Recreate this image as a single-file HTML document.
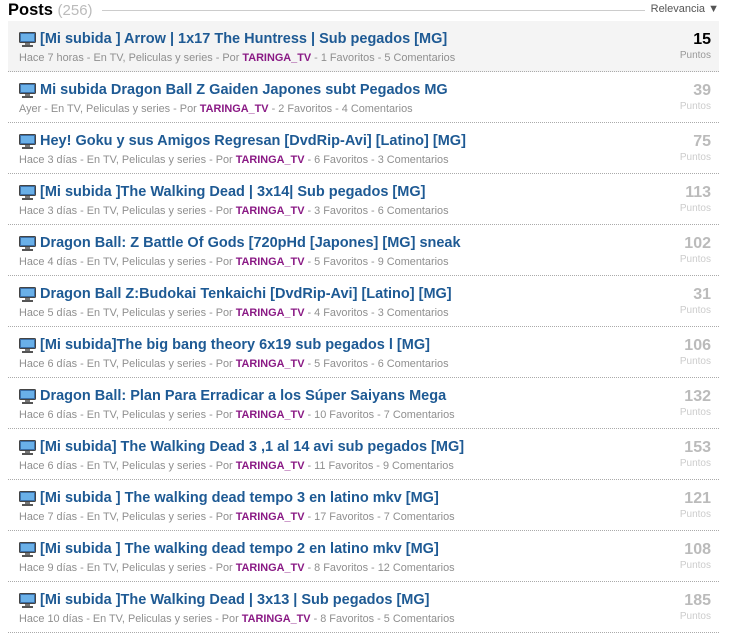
<!DOCTYPE html>
<html><head><meta charset="utf-8"><style>
body{margin:0;background:#fff;font-family:"Liberation Sans",Arial,sans-serif;width:729px;height:634px;overflow:hidden;position:relative}
.hd{position:absolute;left:8px;top:0;font-size:16.5px;font-weight:bold;color:#000;line-height:20px}
.hd span{color:#bbb;font-weight:normal;font-size:15px}
.hl{position:absolute;left:102px;right:84px;top:10px;border-top:1px solid #ccc}
.rel{position:absolute;right:10px;top:3px;font-size:11px;color:#555}
.row{position:absolute;left:8px;width:711px;height:50px;border-bottom:1px dotted #aaa}
.row.a{background:#f4f4f4}
.ic{position:absolute;left:11px;top:11px}
.t{position:absolute;left:32px;top:10px;font-size:14.5px;font-weight:bold;color:#1e5a94;white-space:nowrap}
.m{position:absolute;left:11px;top:31px;font-size:10.9px;color:#8f8f8f;white-space:nowrap}
.m b{color:#8a1a85;font-weight:bold}
.n{position:absolute;right:8px;top:10px;font-size:16px;font-weight:bold;color:#bbb;text-align:right}
.p{position:absolute;right:8px;top:29px;font-size:10px;color:#ccc}
.a .n{color:#000}.a .p{color:#999}
</style></head><body>
<div class="hd">Posts <span>(256)</span></div><div class="hl"></div>
<div class="rel">Relevancia ▼</div>
<div id="c"></div>
<script>
var d=[["[Mi subida ] Arrow | 1x17 The Huntress | Sub pegados [MG]","Hace 7 horas","1","5",15],
["Mi subida Dragon Ball Z Gaiden Japones subt Pegados MG","Ayer","2","4",39],
["Hey! Goku y sus Amigos Regresan [DvdRip-Avi] [Latino] [MG]","Hace 3 días","6","3",75],
["[Mi subida ]The Walking Dead | 3x14| Sub pegados [MG]","Hace 3 días","3","6",113],
["Dragon Ball: Z Battle Of Gods [720pHd [Japones] [MG] sneak","Hace 4 días","5","9",102],
["Dragon Ball Z:Budokai Tenkaichi [DvdRip-Avi] [Latino] [MG]","Hace 5 días","4","3",31],
["[Mi subida]The big bang theory 6x19 sub pegados l [MG]","Hace 6 días","5","6",106],
["Dragon Ball: Plan Para Erradicar a los Súper Saiyans Mega","Hace 6 días","10","7",132],
["[Mi subida] The Walking Dead 3 ,1 al 14 avi sub pegados [MG]","Hace 6 días","11","9",153],
["[Mi subida ] The walking dead tempo 3 en latino mkv [MG]","Hace 7 días","17","7",121],
["[Mi subida ] The walking dead tempo 2 en latino mkv [MG]","Hace 9 días","8","12",108],
["[Mi subida ]The Walking Dead | 3x13 | Sub pegados [MG]","Hace 10 días","8","5",185]];
var ic='<svg class="ic" width="17" height="15" viewBox="0 0 17 15"><rect x="0.5" y="0.5" width="16" height="10" rx="1" fill="#3a6fa8" stroke="#444"/><rect x="2" y="2" width="13" height="7" fill="#6ab0e8"/><rect x="6" y="11" width="5" height="2" fill="#777"/><rect x="3" y="13" width="11" height="2" fill="#555"/></svg>';
var h='';d.forEach(function(r,i){h+='<div class="row'+(i==0?' a':'')+'" style="top:'+(21+i*51)+'px">'+ic+'<div class="t">'+r[0]+'</div><div class="m">'+r[1]+' - En TV, Peliculas y series - Por <b>TARINGA_TV</b> - '+r[2]+' Favoritos - '+r[3]+' Comentarios</div><div class="n">'+r[4]+'</div><div class="p">Puntos</div></div>';});
document.getElementById('c').innerHTML=h;
</script>
</body></html>
